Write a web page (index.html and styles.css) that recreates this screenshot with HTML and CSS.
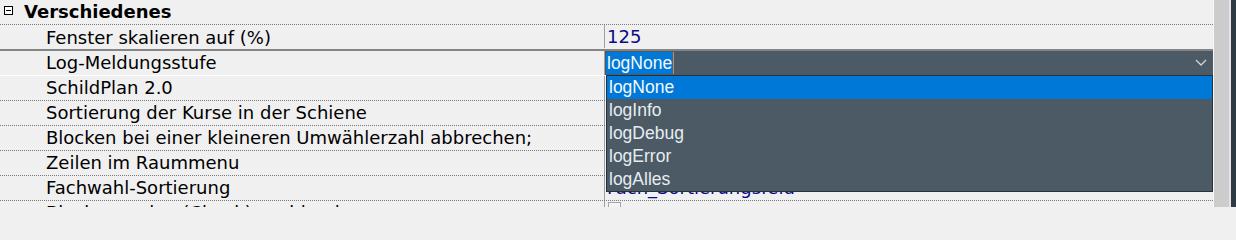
FILE: index.html
```html
<!DOCTYPE html>
<html>
<head>
<meta charset="utf-8">
<link rel="stylesheet" href="styles.css">
</head>
<body>
<div class="window">
  <div class="grid">
    <div class="cat">
      <svg class="toggle" width="9" height="9" viewBox="0 0 9 9"><rect x="0.5" y="0.5" width="8" height="8" fill="#fff" stroke="#000" stroke-width="1"/><line x1="2" y1="4.5" x2="7" y2="4.5" stroke="#000" stroke-width="1"/></svg>
      <span class="cat-title">Verschiedenes</span>
    </div>
    <div class="row row-above">
      <div class="name">Fenster skalieren auf (%)</div>
      <div class="value navy">125</div>
    </div>
    <div class="row row-sel">
      <div class="name">Log-Meldungsstufe</div>
      <div class="value editor">
        <span class="sel-text">logNone</span><span class="caret"></span>
        <svg class="chev" width="12" height="7" viewBox="0 0 12 7"><polyline points="1,1 6,6 11,1" fill="none" stroke="#d0d6da" stroke-width="1.3"/></svg>
      </div>
      <div class="list">
        <div class="item active">logNone</div>
        <div class="item">logInfo</div>
        <div class="item">logDebug</div>
        <div class="item">logError</div>
        <div class="item">logAlles</div>
      </div>
    </div>
    <div class="row">
      <div class="name">SchildPlan 2.0</div>
      <div class="value"></div>
    </div>
    <div class="row">
      <div class="name">Sortierung der Kurse in der Schiene</div>
      <div class="value"></div>
    </div>
    <div class="row">
      <div class="name">Blocken bei einer kleineren Umwählerzahl abbrechen;</div>
      <div class="value"></div>
    </div>
    <div class="row">
      <div class="name">Zeilen im Raummenu</div>
      <div class="value"></div>
    </div>
    <div class="row">
      <div class="name">Fachwahl-Sortierung</div>
      <div class="value navy">Fach_Sortierungsfeld</div>
    </div>
    <div class="row">
      <div class="name">Blockungsplan (Check) ausblenden</div>
      <div class="value"><span class="check"></span></div>
    </div>
  </div>
  <div class="edge"></div>
  <div class="sbar"></div>
  <div class="edge2"></div>
  <div class="dark"></div>
</div>
</body>
</html>
```

FILE: styles.css
```css
html, body {
  margin: 0;
  padding: 0;
  background: #f0f0f0;
  overflow: hidden;
}
.window {
  display: flex;
  width: 1236px;
  height: 207px;
  overflow: hidden;
  font-family: "DejaVu Sans", Verdana, sans-serif;
  font-size: 18px;
  color: #000;
}
.grid {
  flex: 0 0 1213px;
  background: #f0f0f0;
  display: flex;
  flex-direction: column;
}
.edge { flex: 0 0 1px; background: #f7f7f7; }
.sbar { flex: 0 0 15px; background: #cccccc; }
.edge2 { flex: 0 0 2px; background: #e4e4e4; }
.dark { flex: 1; background: #2e3b44; }

.cat {
  flex: 0 0 24px;
  display: flex;
  align-items: center;
  border-bottom: 1px dotted #7a7a7a;
}
.toggle {
  margin-left: 4px;
  margin-top: -3px;
  flex: none;
}
.cat-title {
  margin-left: 11px;
  font-weight: bold;
  font-size: 18px;
  line-height: 24px;
}
.row {
  flex: 0 0 24px;
  display: flex;
  border-bottom: 1px dotted #7a7a7a;
  position: relative;
}
.row-above {
  flex-basis: 23px;
  border-bottom: 2px solid #858585;
}
.row-sel {
  border-bottom: 1px solid #ffffff;
}
.name {
  flex: 0 0 558px;
  padding-left: 46px;
  line-height: 24px;
  white-space: nowrap;
  overflow: hidden;
  border-right: 1px solid #a0a0a0;
}
.row-above .name { line-height: 23px; padding-top: 1px; height: 22px; }
.value {
  flex: 1;
  padding-left: 2px;
  line-height: 24px;
  white-space: nowrap;
  overflow: hidden;
}
.navy { color: #0c0a84; }
.editor {
  background: #4b5a64;
  display: flex;
  align-items: center;
  padding-left: 1px;
  color: #fff;
  font-family: "Liberation Sans", Arial, sans-serif;
  font-size: 17.5px;
}
.sel-text {
  background: #0078d7;
  color: #f4f8fb;
  line-height: 22px;
  padding: 0 1px;
  margin-top: -1px;
}
.caret {
  width: 1px;
  height: 22px;
  background: #f08020;
  margin-top: -1px;
}
.chev {
  margin-left: auto;
  margin-right: 6px;
  margin-top: -1px;
}
.list {
  position: absolute;
  top: 24px;
  left: 606px;
  width: 605px;
  background: #4b5a64;
  border: 1px solid #27333b;
  z-index: 2;
  font-family: "Liberation Sans", Arial, sans-serif;
  font-size: 17.5px;
}
.item {
  height: 23px;
  line-height: 23px;
  padding-left: 2px;
  color: #e6edf2;
}
.item.active {
  background: #0078d7;
  color: #f6f9fc;
}
.check {
  display: inline-block;
  width: 11px;
  height: 11px;
  border: 1px solid #a6a6a6;
  background: #f4f4f4;
  margin-left: 1px;
  margin-top: 1px;
  vertical-align: top;
}
```
